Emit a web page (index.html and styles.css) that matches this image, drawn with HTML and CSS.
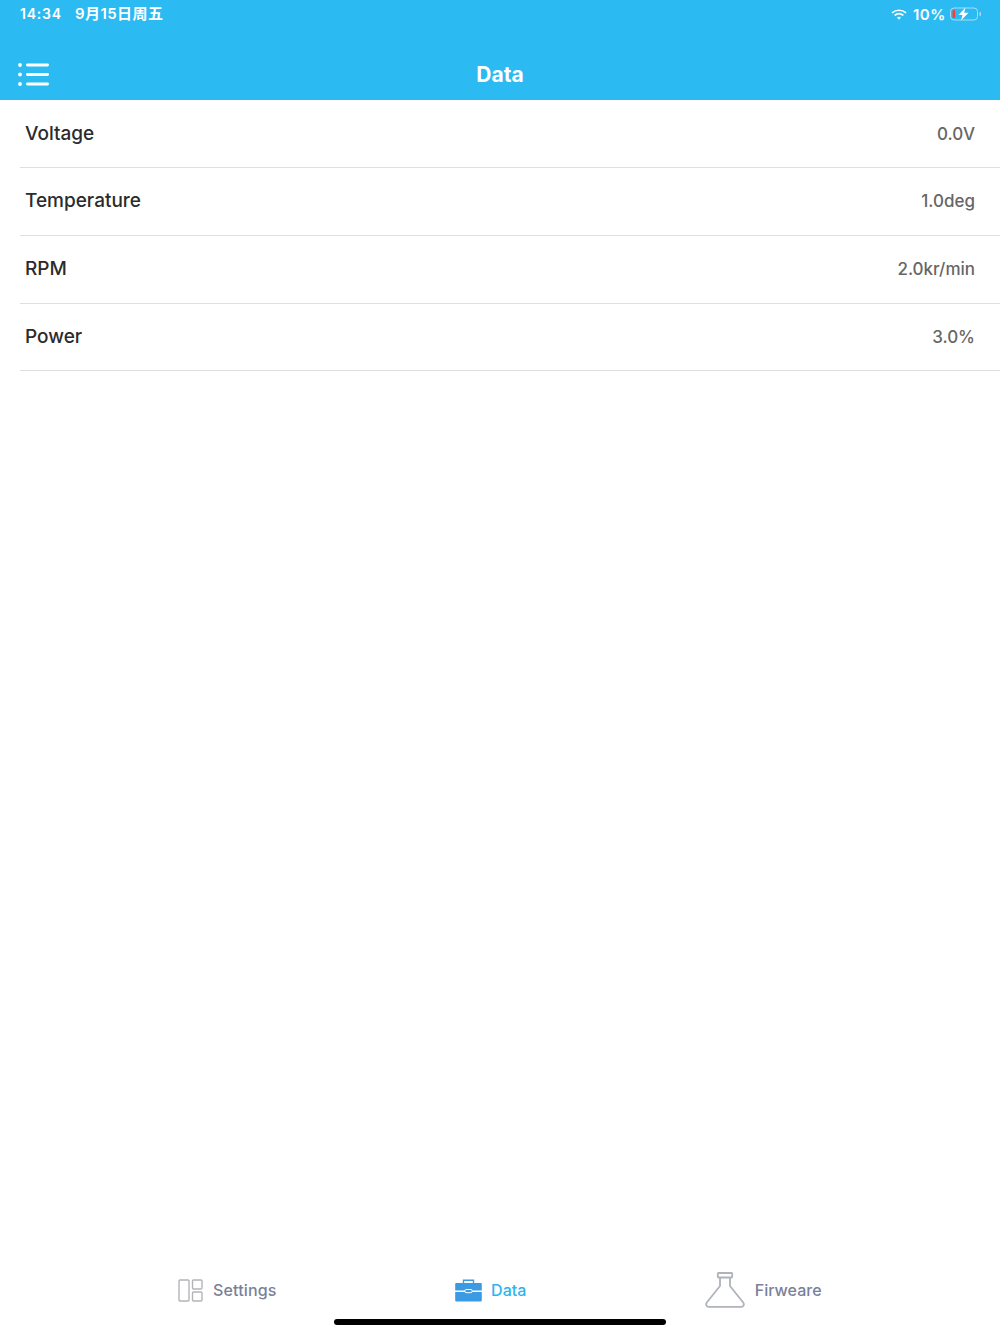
FILE: index.html
```html
<!DOCTYPE html>
<html lang="en">
<head>
    <meta charset="UTF-8">
    <meta name="viewport" content="width=device-width, initial-scale=1.0">
    <title>Data</title>
    <link rel="stylesheet" href="styles.css">
</head>
<body>
    <div class="app">
        <header class="top">
            <!-- Status bar -->
            <div class="status">
                <div class="status-left">
                    <span>14:34</span>
                    <span class="status-date">9月15日周五</span>
                </div>
                <div class="status-right">
                    <svg class="wifi" width="16" height="11" viewBox="0 0 16 11">
                        <path d="M1 3.8C5 0.4 11 0.4 15 3.8" fill="none" stroke="#fff" stroke-width="1.7"/>
                        <path d="M3.6 6.3C6.2 4.2 9.8 4.2 12.4 6.3" fill="none" stroke="#fff" stroke-width="1.7"/>
                        <path d="M6 8.6C7.2 7.6 8.8 7.6 10 8.6L8 10.8Z" fill="#fff"/>
                    </svg>
                    <span>10%</span>
                    <svg class="battery" width="32" height="14" viewBox="0 0 32 14">
                        <rect x="0.5" y="1" width="27" height="12" rx="3.5" fill="none" stroke="#a9dcf6" stroke-width="1"/>
                        <rect x="2.5" y="3" width="2.6" height="8" rx="1" fill="#ff3b30"/>
                        <path d="M15.5 0.5L8.5 8H12.5L11 13.5L18.5 5.8H14.2Z" fill="#fff"/>
                        <rect x="29.5" y="5" width="1.5" height="4" rx="0.7" fill="#a9dcf6"/>
                    </svg>
                </div>
            </div>
            <!-- Nav bar -->
            <div class="nav">
                <svg class="menu" width="32" height="25" viewBox="0 0 32 25">
                    <circle cx="2" cy="3" r="1.9" fill="#fff"/>
                    <circle cx="2" cy="12.5" r="1.9" fill="#fff"/>
                    <circle cx="2" cy="22" r="1.9" fill="#fff"/>
                    <rect x="8" y="1.6" width="23" height="2.8" rx="1.4" fill="#fff"/>
                    <rect x="8" y="11.1" width="23" height="2.8" rx="1.4" fill="#fff"/>
                    <rect x="8" y="20.6" width="23" height="2.8" rx="1.4" fill="#fff"/>
                </svg>
                <h1 class="title">Data</h1>
            </div>
        </header>

        <main class="list">
            <div class="row">
                <span class="row-label">Voltage</span>
                <span class="row-value">0.0V</span>
            </div>
            <div class="row">
                <span class="row-label">Temperature</span>
                <span class="row-value">1.0deg</span>
            </div>
            <div class="row">
                <span class="row-label">RPM</span>
                <span class="row-value">2.0kr/min</span>
            </div>
            <div class="row">
                <span class="row-label">Power</span>
                <span class="row-value">3.0%</span>
            </div>
        </main>

        <!-- Tabs -->
        <nav class="tabs">
            <div class="tab tab-settings">
                <svg width="25" height="23" viewBox="0 0 25 23">
                    <rect x="1" y="1" width="10" height="21" rx="1" fill="none" stroke="#b4b4b8" stroke-width="1.4"/>
                    <rect x="14.5" y="1" width="9.5" height="9" rx="1" fill="none" stroke="#b4b4b8" stroke-width="1.4"/>
                    <rect x="14.5" y="13" width="9.5" height="9" rx="1" fill="none" stroke="#b4b4b8" stroke-width="1.4"/>
                </svg>
                <span>Settings</span>
            </div>
            <div class="tab tab-data active">
                <svg width="27" height="23" viewBox="0 0 27 23">
                    <path d="M8.5 4V1.2H18.5V4" fill="none" stroke="#3a9be2" stroke-width="1.4"/>
                    <path d="M1.2 4H25.8A1 1 0 0 1 26.8 5V11.4H0.2V5A1 1 0 0 1 1.2 4Z" fill="#3a9be2"/>
                    <path d="M0.2 13H26.8V21.5A1 1 0 0 1 25.8 22.5H1.2A1 1 0 0 1 0.2 21.5Z" fill="#3a9be2"/>
                    <rect x="10" y="10.5" width="7" height="3.2" rx="1" fill="#3a9be2" stroke="#fff" stroke-width="1"/>
                </svg>
                <span>Data</span>
            </div>
            <div class="tab tab-firmware">
                <svg width="40" height="36" viewBox="0 0 40 36">
                    <path d="M13.5 5.5H26.5A0.8 0.8 0 0 0 27.2 4.8V1.8A0.8 0.8 0 0 0 26.5 1H13.5A0.8 0.8 0 0 0 12.8 1.8V4.8A0.8 0.8 0 0 0 13.5 5.5Z" fill="none" stroke="#b0b2bc" stroke-width="1.8"/>
                    <path d="M15 5.5V14L1.8 30.5C0.4 32.5 1.4 34.8 3.8 34.8H36.2C38.6 34.8 39.6 32.5 38.2 30.5L25 14V5.5" fill="none" stroke="#b0b2bc" stroke-width="1.8"/>
                </svg>
                <span>Firweare</span>
            </div>
        </nav>
        <div class="home-bar"></div>
    </div>
</body>
</html>
```

FILE: styles.css
```css
* {
    box-sizing: border-box;
}
html, body {
    margin: 0;
    padding: 0;
}
body {
    font-family: Inter, "Noto Sans CJK SC", sans-serif;
    background: #ffffff;
}
.app {
    width: 1000px;
    height: 1334px;
    display: flex;
    flex-direction: column;
    position: relative;
    overflow: hidden;
}
.top {
    height: 100px;
    background: #2cbaf2;
    color: #ffffff;
    display: flex;
    flex-direction: column;
}
.status {
    height: 28px;
    padding: 0 18px 0 20px;
    display: flex;
    justify-content: space-between;
    align-items: center;
    font-size: 14px;
    font-weight: 600;
    letter-spacing: 0.8px;
}
.status-left {
    display: flex;
    align-items: center;
    gap: 13px;
    line-height: 16px;
}
.status-date {
    font-size: 15px;
    letter-spacing: 0.45px;
    line-height: 16px;
}
.status-right {
    display: flex;
    align-items: center;
    gap: 6px;
    font-size: 15px;
    letter-spacing: 0.6px;
}
.battery {
    margin-left: -2px;
}
.nav {
    flex: 1;
    padding: 20px 0 0 18px;
    display: grid;
    grid-template-columns: 1fr auto 1fr;
    align-items: center;
}
.title {
    margin: 0 0 0 -18px;
    font-size: 21px;
    font-weight: 700;
}
.list {
    flex: 1;
    padding-left: 20px;
}
.row {
    height: 68px;
    margin-bottom: -0.25px;
    padding: 0 25px 0 5px;
    display: flex;
    justify-content: space-between;
    align-items: center;
    line-height: 24px;
    border-bottom: 1px solid #dfdfdf;
}
.row-label {
    font-size: 19px;
    font-weight: 550;
    color: #2b2b2b;
}
.row-value {
    font-size: 17px;
    font-weight: 500;
    color: #666666;
}
.tabs {
    height: 90px;
    padding: 2px 0 0 178px;
    display: flex;
    align-items: center;
    gap: 178.5px;
}
.tab {
    display: flex;
    align-items: center;
    font-size: 16px;
    font-weight: 550;
    color: #7a7f9a;
}
.tab-settings {
    gap: 10px;
    letter-spacing: 0.15px;
}
.tab-data {
    gap: 9px;
}
.tab-firmware {
    gap: 10px;
}
.active {
    color: #2cb5ee;
}
.home-bar {
    position: absolute;
    left: 334px;
    bottom: 9px;
    width: 332px;
    height: 6px;
    border-radius: 3px;
    background: #000000;
}
```
